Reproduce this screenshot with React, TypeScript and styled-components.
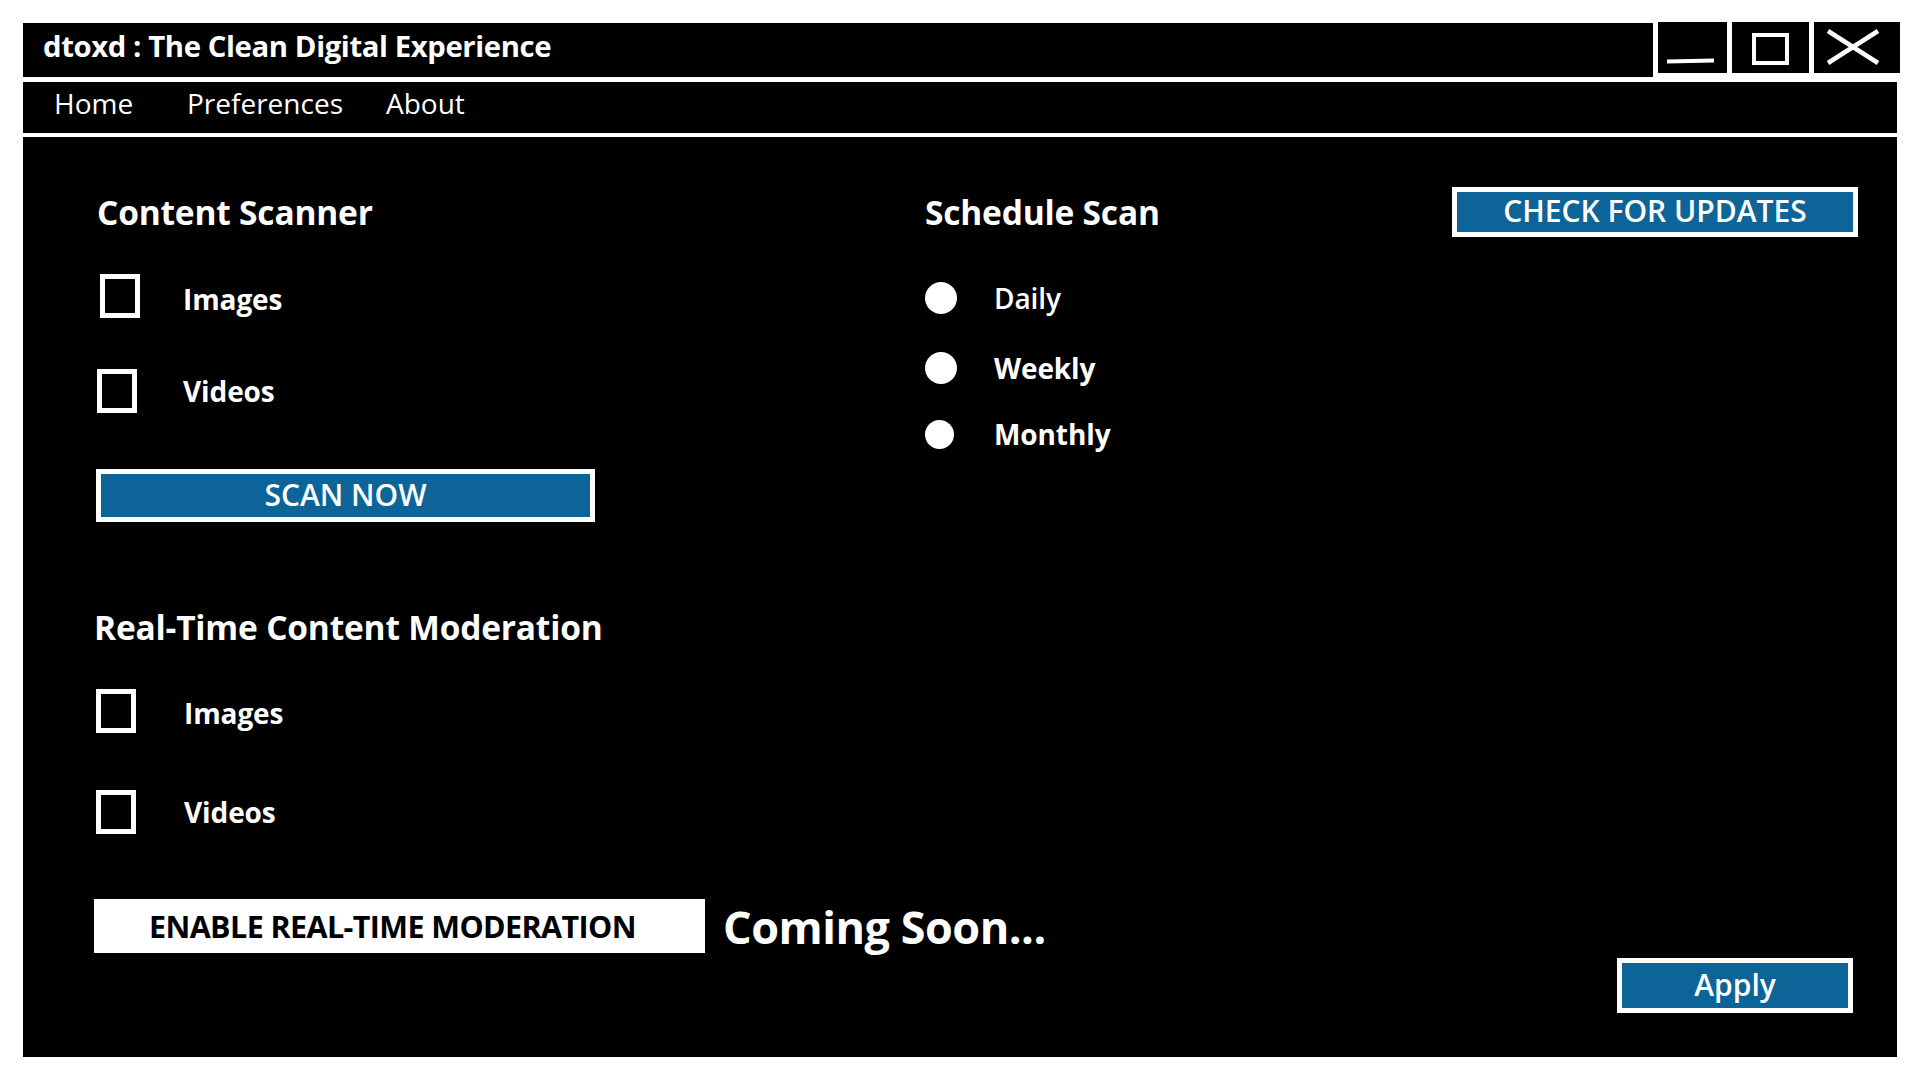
import React from "react";
import styled, { createGlobalStyle } from "styled-components";

const Global = createGlobalStyle`
  html, body { margin: 0; padding: 0; background: #fff; }
  body { font-family: "Open Sans", "Noto Sans", sans-serif; }
  * { box-sizing: border-box; }
`;

const BLUE = "#0c6498";

const Page = styled.div`
  width: 1920px;
  height: 1080px;
  padding: 22px 0 0 23px;
  background: #fff;
`;

const TitleRow = styled.div`
  display: flex;
  gap: 5px;
  align-items: flex-start;
`;

const TitleBar = styled.header`
  width: 1630px;
  height: 54px;
  margin-top: 1px;
  background: #000;
  color: #fff;
  display: flex;
  align-items: center;
  padding: 0 0 8px 20px;
  font-size: 29.3px;
  font-weight: 700;
  letter-spacing: -0.4px;
`;

const WinButton = styled.div<{ $w: number }>`
  width: ${(p) => p.$w}px;
  height: 51px;
  background: #000;
  display: flex;
  align-items: center;
  justify-content: center;
`;

const MenuBar = styled.nav`
  width: 1874px;
  height: 51px;
  margin-top: 5px;
  background: #000;
  color: #fff;
  display: flex;
  align-items: center;
  padding: 0 0 10px 31px;
`;

const MenuItem = styled.span<{ $w?: number }>`
  width: ${(p) => (p.$w ? `${p.$w}px` : "auto")};
  font-size: 28px;
  font-weight: 400;
`;

const Main = styled.main`
  width: 1874px;
  height: 920px;
  margin-top: 4px;
  background: #000;
  color: #fff;
  padding: 45px 44px 0 73px;
  display: flex;
  flex-direction: column;
`;

const TopGrid = styled.div`
  display: grid;
  grid-template-columns: 829px 527px 406px;
  align-items: start;
`;

const Column = styled.section`
  display: flex;
  flex-direction: column;
`;

const Heading = styled.h2<{ $top?: number; $indent?: number }>`
  margin: ${(p) => p.$top ?? 0}px 0 0 ${(p) => p.$indent ?? 0}px;
  height: 60px;
  display: flex;
  align-items: center;
  font-size: 33.5px;
  font-weight: 700;
  letter-spacing: -0.2px;
`;

const OptionRow = styled.div<{ $top: number; $h?: number; $indent?: number }>`
  display: flex;
  align-items: center;
  height: ${(p) => p.$h ?? 44}px;
  margin-top: ${(p) => p.$top}px;
  padding-left: ${(p) => p.$indent ?? 0}px;
`;

const Box = styled.span`
  width: 40px;
  height: 44px;
  border: 5px solid #fff;
  flex: none;
`;

const Dot = styled.span<{ $d: number }>`
  width: ${(p) => p.$d}px;
  height: ${(p) => p.$d}px;
  border-radius: 50%;
  background: #fff;
  flex: none;
`;

const OptionLabel = styled.span<{ $gap: number; $weight?: number; $drop?: number }>`
  margin-left: ${(p) => p.$gap}px;
  padding-top: ${(p) => p.$drop ?? 0}px;
  font-size: 28px;
  font-weight: ${(p) => p.$weight ?? 700};
  letter-spacing: -0.1px;
`;

const BlueButton = styled.button<{ $w: number; $h: number; $top?: number }>`
  width: ${(p) => p.$w}px;
  height: ${(p) => p.$h}px;
  margin-top: ${(p) => p.$top ?? 0}px;
  background: ${BLUE};
  border: 5px solid #fff;
  color: #fff;
  font-family: inherit;
  font-size: 30px;
  font-weight: 600;
  padding: 0 0 3px 0;
  display: flex;
  align-items: center;
  justify-content: center;
`;

const BottomRow = styled.div`
  display: flex;
  align-items: flex-start;
  margin-top: 65px;
  margin-left: -2px;
`;

const WhiteButton = styled.button`
  width: 611px;
  height: 54px;
  background: #fff;
  border: none;
  color: #000;
  font-family: inherit;
  font-size: 30.5px;
  font-weight: 700;
  padding: 0 14px 0 0;
  display: flex;
  align-items: center;
  justify-content: center;
  letter-spacing: -0.6px;
`;

const Soon = styled.span`
  margin-left: 18px;
  height: 54px;
  display: flex;
  align-items: center;
  font-size: 45px;
  font-weight: 700;
  letter-spacing: -0.5px;
`;

const Spacer = styled.div`
  flex: 1;
`;

const MinIcon = () => (
  <svg width="69" height="51" viewBox="0 0 69 51">
    <path d="M9 39.5 L56 38.5" stroke="#fff" strokeWidth="4" />
  </svg>
);
const MaxIcon = () => (
  <svg width="77" height="51" viewBox="0 0 77 51">
    <rect x="22" y="13" width="33" height="28" fill="none" stroke="#fff" strokeWidth="4" />
  </svg>
);
const CloseIcon = () => (
  <svg width="86" height="51" viewBox="0 0 86 51">
    <path d="M14 9 L64 41 M14 41 L64 9" stroke="#fff" strokeWidth="4.5" />
  </svg>
);

export default function App() {
  return (
    <>
      <Global />
      <Page>
        <TitleRow>
          <TitleBar>dtoxd : The Clean Digital Experience</TitleBar>
          <WinButton $w={69}>
            <MinIcon />
          </WinButton>
          <WinButton $w={77}>
            <MaxIcon />
          </WinButton>
          <WinButton $w={86}>
            <CloseIcon />
          </WinButton>
        </TitleRow>
        <MenuBar>
          <MenuItem $w={133}>Home</MenuItem>
          <MenuItem $w={199}>Preferences</MenuItem>
          <MenuItem>About</MenuItem>
        </MenuBar>
        <Main>
          <TopGrid>
            <Column>
              <Heading $indent={1}>Content Scanner</Heading>
              <OptionRow $top={32} $indent={4}>
                <Box />
                <OptionLabel $gap={43} $drop={6}>
                  Images
                </OptionLabel>
              </OptionRow>
              <OptionRow $top={51} $indent={1}>
                <Box />
                <OptionLabel $gap={46}>Videos</OptionLabel>
              </OptionRow>
              <BlueButton $w={499} $h={53} $top={56}>
                SCAN NOW
              </BlueButton>
            </Column>
            <Column>
              <Heading>Schedule Scan</Heading>
              <OptionRow $top={36} $h={40}>
                <Dot $d={32} />
                <OptionLabel $gap={37} $weight={600}>
                  Daily
                </OptionLabel>
              </OptionRow>
              <OptionRow $top={30} $h={40}>
                <Dot $d={32} />
                <OptionLabel $gap={37}>Weekly</OptionLabel>
              </OptionRow>
              <OptionRow $top={26} $h={40}>
                <Dot $d={29} />
                <OptionLabel $gap={40}>Monthly</OptionLabel>
              </OptionRow>
            </Column>
            <Column>
              <BlueButton $w={406} $h={50} $top={5}>
                CHECK FOR UPDATES
              </BlueButton>
            </Column>
          </TopGrid>
          <Heading $top={75} $indent={-2}>
            Real-Time Content Moderation
          </Heading>
          <OptionRow $top={32}>
            <Box />
            <OptionLabel $gap={48} $drop={4}>
              Images
            </OptionLabel>
          </OptionRow>
          <OptionRow $top={57}>
            <Box />
            <OptionLabel $gap={48}>Videos</OptionLabel>
          </OptionRow>
          <BottomRow>
            <WhiteButton>ENABLE REAL-TIME MODERATION</WhiteButton>
            <Soon>Coming Soon...</Soon>
            <Spacer />
            <BlueButton $w={236} $h={55} $top={59}>
              Apply
            </BlueButton>
          </BottomRow>
        </Main>
      </Page>
    </>
  );
}
